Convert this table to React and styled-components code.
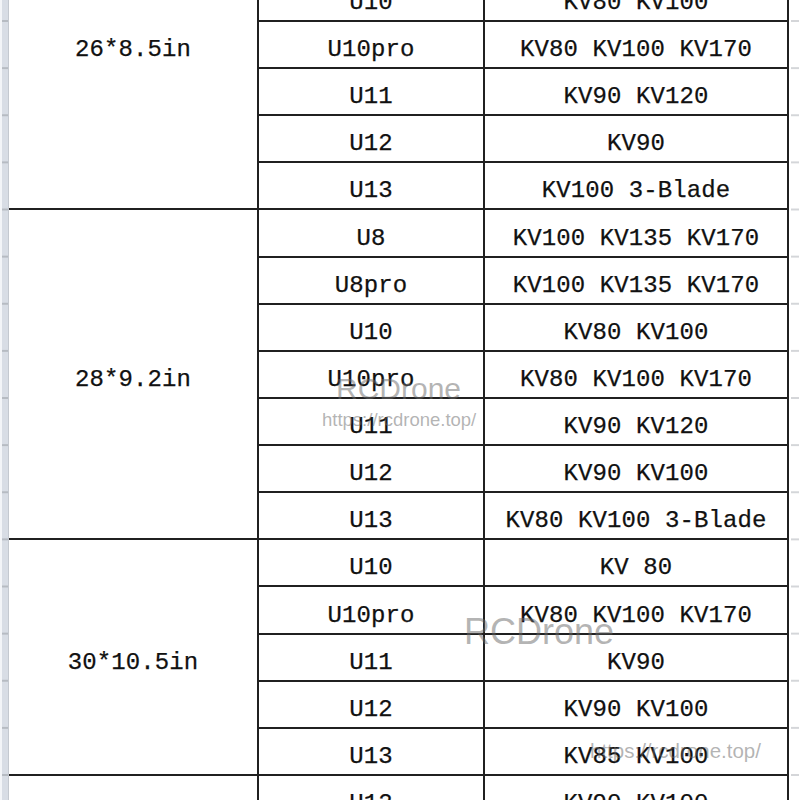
import React from "react";
import styled, { createGlobalStyle } from "styled-components";

const ROW = 45.125;
const GAP = 2;
const PITCH = ROW + GAP;
const OFFSET = -119.4;

const Global = createGlobalStyle`
  html, body {
    margin: 0;
    padding: 0;
    background: #ffffff;
    overflow: hidden;
  }
`;

const Page = styled.div`
  position: relative;
  display: flex;
  width: 800px;
  height: 800px;
  overflow: hidden;
  background: #ffffff;
`;

const LeftGutter = styled.div`
  flex: 0 0 9px;
  height: 100%;
  box-sizing: border-box;
  border-left: 2px solid #f3f5f8;
  border-right: 1px solid #c4c9d0;
  background-color: #d8dde5;
  background-image: linear-gradient(
    to bottom,
    transparent 0,
    transparent ${ROW}px,
    #b6bbc2 ${ROW}px,
    #b6bbc2 ${PITCH}px
  );
  background-size: 100% ${PITCH}px;
  background-position: 0 ${OFFSET}px;
  background-repeat: repeat-y;
`;

const RightGutter = styled.div`
  flex: 1 1 auto;
  height: 100%;
  background-image: linear-gradient(
    to bottom,
    transparent 0,
    transparent ${ROW}px,
    #d4d6d9 ${ROW}px,
    #d4d6d9 ${PITCH}px
  );
  background-size: 8px ${PITCH}px;
  background-position: 2px ${OFFSET}px;
  background-repeat: repeat-y;
`;

const Sheet = styled.div`
  flex: 0 0 auto;
  align-self: flex-start;
  margin-top: ${OFFSET}px;
  display: grid;
  grid-template-columns: 248px 224px 302px;
  grid-auto-rows: ${ROW}px;
  gap: ${GAP}px;
  padding: 0 2px ${GAP}px 0;
  background: #202020;
`;

const Cell = styled.div`
  grid-column: ${(p) => p.$col};
  grid-row: ${(p) => (p.$span ? `span ${p.$span}` : "auto")};
  display: flex;
  align-items: center;
  justify-content: center;
  padding-top: 10px;
  box-sizing: border-box;
  background: #ffffff;
  color: #111111;
  font-family: "Liberation Mono", "DejaVu Sans Mono", monospace;
  font-size: 24px;
  white-space: pre;
  letter-spacing: 0.1px;
  -webkit-text-stroke: 0.25px #111111;
`;

const Watermark = styled.div`
  position: absolute;
  left: ${(p) => p.$x}px;
  top: ${(p) => p.$y}px;
  font-family: "Liberation Sans", Arial, sans-serif;
  font-size: ${(p) => p.$size}px;
  line-height: 1;
  color: rgba(105, 105, 105, 0.5);
  white-space: nowrap;
  pointer-events: none;
`;

const groups = [
  {
    label: "26*8.5in",
    rows: [
      ["U8", "KV100 KV135 KV170"],
      ["U8pro", "KV100 KV135 KV170"],
      ["U10", "KV80 KV100"],
      ["U10pro", "KV80 KV100 KV170"],
      ["U11", "KV90 KV120"],
      ["U12", "KV90"],
      ["U13", "KV100 3-Blade"],
    ],
  },
  {
    label: "28*9.2in",
    rows: [
      ["U8", "KV100 KV135 KV170"],
      ["U8pro", "KV100 KV135 KV170"],
      ["U10", "KV80 KV100"],
      ["U10pro", "KV80 KV100 KV170"],
      ["U11", "KV90 KV120"],
      ["U12", "KV90 KV100"],
      ["U13", "KV80 KV100 3-Blade"],
    ],
  },
  {
    label: "30*10.5in",
    rows: [
      ["U10", "KV 80"],
      ["U10pro", "KV80 KV100 KV170"],
      ["U11", "KV90"],
      ["U12", "KV90 KV100"],
      ["U13", "KV85 KV100"],
    ],
  },
  {
    label: "32*11in",
    rows: [
      ["U12", "KV90 KV100"],
      ["U13", "KV80 KV100"],
      ["U15", "KV80"],
    ],
  },
];

export default function App() {
  return (
    <>
      <Global />
      <Page>
        <LeftGutter />
        <Sheet>
          {groups.map((g) => (
            <React.Fragment key={g.label}>
              <Cell $col={1} $span={g.rows.length}>
                {g.label}
              </Cell>
              {g.rows.map(([model, kv], i) => (
                <React.Fragment key={i}>
                  <Cell $col={2}>{model}</Cell>
                  <Cell $col={3}>{kv}</Cell>
                </React.Fragment>
              ))}
            </React.Fragment>
          ))}
        </Sheet>
        <RightGutter />
        <Watermark $x={336} $y={374} $size={30}>RCDrone</Watermark>
        <Watermark $x={322} $y={411} $size={18.5}>https://rcdrone.top/</Watermark>
        <Watermark $x={464} $y={614} $size={36}>RCDrone</Watermark>
        <Watermark $x={590} $y={741} $size={20.5}>https://rcdrone.top/</Watermark>
      </Page>
    </>
  );
}
